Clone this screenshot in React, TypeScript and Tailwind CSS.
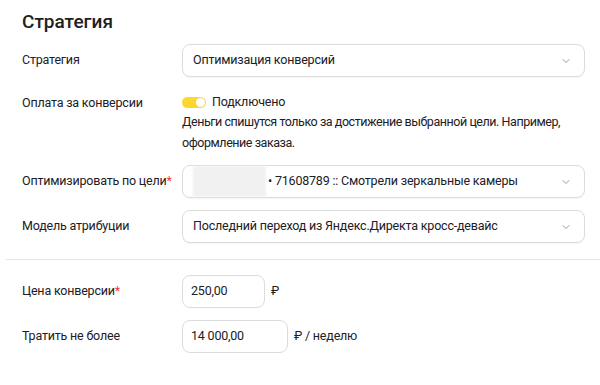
import { ChevronDown } from "lucide-react";

function Select({ children }: { children: React.ReactNode }) {
  return (
    <div className="flex h-[33px] w-[403px] items-center justify-between rounded-lg border border-[#dcdcdc] bg-white pl-[10px] pr-[12px] shadow-[0_1px_1px_rgba(0,0,0,0.04)]">
      <div className="flex items-center text-[12.5px] tracking-[-0.2px] text-[#21201f]">{children}</div>
      <ChevronDown className="h-3 w-3 text-[#777]" strokeWidth={1.5} />
    </div>
  );
}

function Row({ label, required, children, className }: { label: string; required?: boolean; children: React.ReactNode; className?: string }) {
  return (
    <div className={"flex " + (className ?? "items-center")}>
      <div className="w-[160px] shrink-0 whitespace-nowrap text-[12.5px] tracking-[-0.2px] text-[#21201f]">
        {label}
        {required && <span className="text-[#f33]">*</span>}
      </div>
      <div>{children}</div>
    </div>
  );
}

export default function App() {
  return (
    <div className="h-[385px] w-[600px] overflow-hidden bg-white font-['Roboto',sans-serif]">
      <div className="px-[22px] pt-[10px]">
        <h2 className="text-[19px] font-medium leading-[24px] text-[#21201f]">Стратегия</h2>

        <div className="mt-[10px] flex flex-col">
          <Row label="Стратегия">
            <Select>Оптимизация конверсий</Select>
          </Row>

          <Row label="Оплата за конверсии" className="mt-[17px] items-start">
            <div className="w-[403px]">
              <div className="flex h-[16px] items-center gap-[6px]">
                <div className="flex h-[11px] w-[24px] items-center justify-end rounded-full bg-[#fdd630] pr-[1px]">
                  <div className="h-[9px] w-[9px] rounded-full bg-white" />
                </div>
                <span className="text-[12.5px] tracking-[-0.2px] text-[#21201f]">Подключено</span>
              </div>
              <p className="mt-[1px] w-[403px] text-[12.5px] leading-[21px] tracking-[-0.45px] text-[#21201f]">
                Деньги спишутся только за достижение выбранной цели. Например, оформление заказа.
              </p>
            </div>
          </Row>

          <div className="mt-[12px]">
            <Row label="Оптимизировать по цели" required>
              <Select>
                <span className="mr-[2px] h-[31px] w-[73px] bg-[#f1f1f1] blur-[1px]" />
                <span>• 71608789 :: Смотрели зеркальные камеры</span>
              </Select>
            </Row>
          </div>

          <div className="mt-[12px]">
            <Row label="Модель атрибуции">
              <Select>Последний переход из Яндекс.Директа кросс-девайс</Select>
            </Row>
          </div>
        </div>
      </div>

      <div className="ml-[6px] mt-[16px] h-px bg-[#e6e6e6]" />

      <div className="flex flex-col gap-[12px] px-[22px] pt-[15px]">
        <Row label="Цена конверсии" required>
          <div className="flex items-center gap-[6px]">
            <div className="flex h-[33px] w-[83px] items-center rounded-lg border border-[#dcdcdc] px-[8px] text-[12.5px] tracking-[-0.2px] text-[#21201f]">250,00</div>
            <span className="text-[12.5px] text-[#21201f]">₽</span>
          </div>
        </Row>
        <Row label="Тратить не более">
          <div className="flex items-center gap-[6px]">
            <div className="flex h-[33px] w-[106px] items-center rounded-lg border border-[#dcdcdc] px-[8px] text-[12.5px] tracking-[-0.2px] text-[#21201f]">14 000,00</div>
            <span className="text-[12.5px] tracking-[-0.2px] text-[#21201f]">₽ / неделю</span>
          </div>
        </Row>
      </div>
    </div>
  );
}
